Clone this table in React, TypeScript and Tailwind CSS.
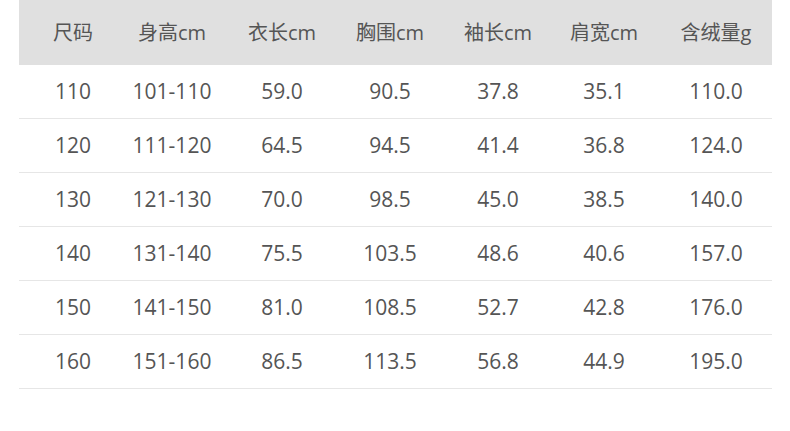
const headers = ['尺码', '身高cm', '衣长cm', '胸围cm', '袖长cm', '肩宽cm', '含绒量g'];

const rows = [
  ['110', '101-110', '59.0', '90.5', '37.8', '35.1', '110.0'],
  ['120', '111-120', '64.5', '94.5', '41.4', '36.8', '124.0'],
  ['130', '121-130', '70.0', '98.5', '45.0', '38.5', '140.0'],
  ['140', '131-140', '75.5', '103.5', '48.6', '40.6', '157.0'],
  ['150', '141-150', '81.0', '108.5', '52.7', '42.8', '176.0'],
  ['160', '151-160', '86.5', '113.5', '56.8', '44.9', '195.0'],
];

const grid = 'grid grid-cols-[108px_90px_130px_86px_130px_82px_127px] items-center';

export default function App() {
  return (
    <div
      className="w-[790px] h-[431px] bg-white text-[#555]"
      style={{ fontFamily: '"Open Sans", "Noto Sans CJK SC", sans-serif' }}
    >
      <div className="ml-[19px] w-[753px]">
        <div className={`${grid} h-[65px] bg-[#e0e0e0] text-[20px]`}>
          {headers.map((h, i) => (
            <div key={h} className={`text-center ${i === 6 ? 'pl-[15px]' : ''}`}>
              {h}
            </div>
          ))}
        </div>
        {rows.map((r) => (
          <div key={r[0]} className={`${grid} h-[54px] border-b border-[#e6e6e6] text-[21px]`}>
            {r.map((c, i) => (
              <div key={i} className={`text-center ${i === 6 ? 'pl-[15px]' : ''}`}>
                {c}
              </div>
            ))}
          </div>
        ))}
      </div>
    </div>
  );
}
